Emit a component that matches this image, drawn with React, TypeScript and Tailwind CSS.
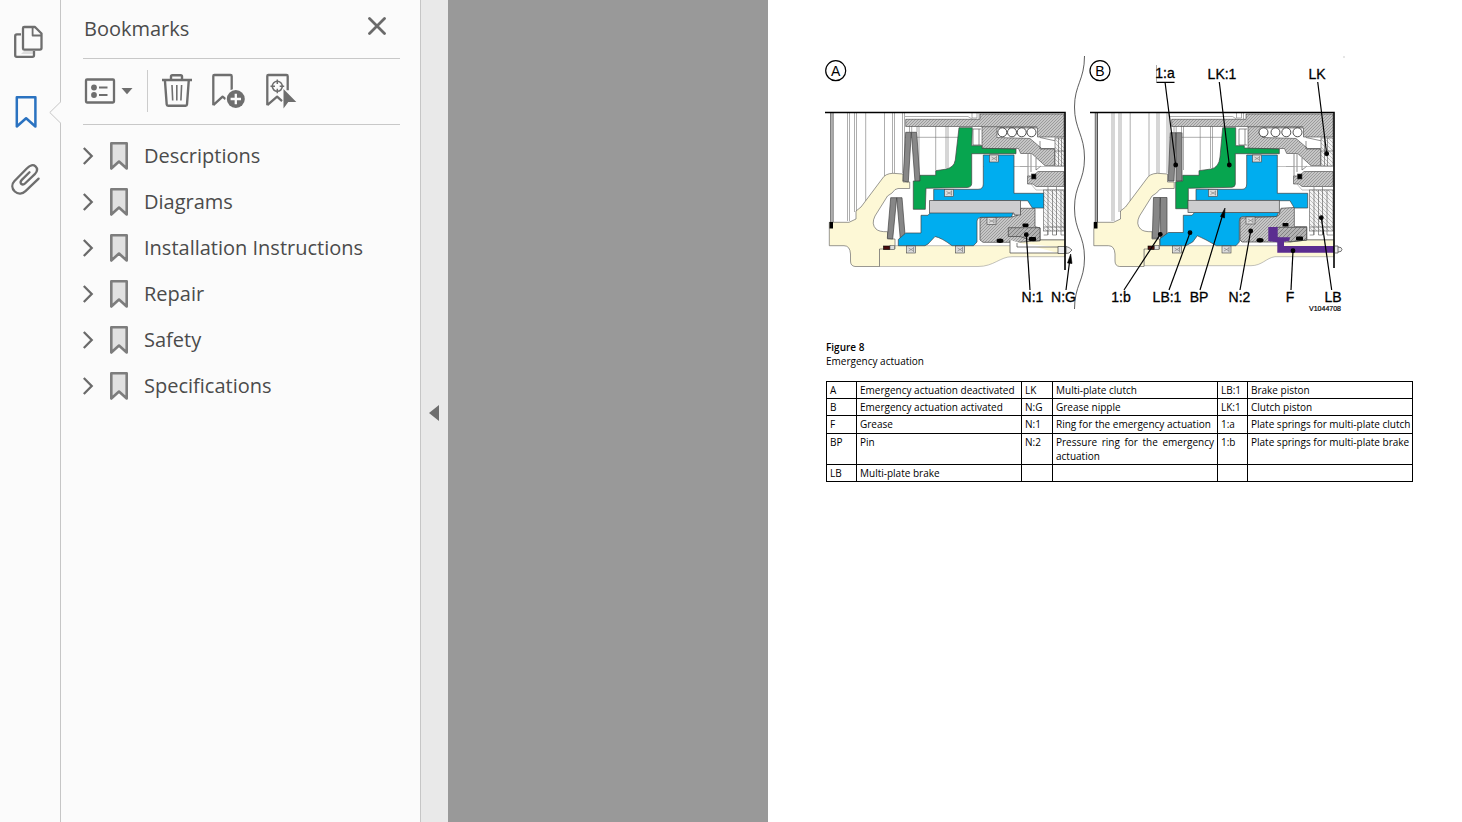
import { useState } from 'react'

const BOOKMARKS = ['Descriptions', 'Diagrams', 'Installation Instructions', 'Repair', 'Safety', 'Specifications']

const LEGEND = [
  ['A', 'Emergency actuation deactivated', 'LK', 'Multi-plate clutch', 'LB:1', 'Brake piston'],
  ['B', 'Emergency actuation activated', 'N:G', 'Grease nipple', 'LK:1', 'Clutch piston'],
  ['F', 'Grease', 'N:1', 'Ring for the emergency actuation', '1:a', 'Plate springs for multi-plate clutch'],
  ['BP', 'Pin', 'N:2', 'Pressure ring for the emergency actuation', '1:b', 'Plate springs for multi-plate brake'],
  ['LB', 'Multi-plate brake', '', '', '', ''],
]

const ROW_HEIGHTS = ['h-[17px]', 'h-[17px]', 'h-[18px]', 'h-[31px]', 'h-[17px]']

/* Rail */

function Rail() {
  return (
    <nav aria-label="Side panels" className="relative w-[60px] shrink-0 flex flex-col gap-8 pt-6 pl-2.5 text-[#6e6e6e]">
      <button aria-label="Page thumbnails" className="w-9 h-9">
        <svg viewBox="10 24 36 36" className="w-9 h-9" fill="none" stroke="currentColor" strokeWidth="2.3" strokeLinejoin="round">
          <path d="M24 51h9v3H21z" fill="#dedede" stroke="none" />
          <path d="M21 34.3h-4.200q-1.600 0-1.600 1.600v19.400q0 1.600 1.600 1.600h15.600q1.600 0 1.600-1.600V51" />
          <path d="M24.300 27h10.700l6.500 6.500v14.600q0 1.600-1.600 1.600H24.300q-1.300 0-1.300-1.300V28.300q0-1.300 1.300-1.300z" />
          <path d="M32.600 27.500v8h8.500" strokeWidth="1.800" />
        </svg>
      </button>
      <button aria-label="Bookmarks" className="w-9 h-9 text-[#2a72c0]">
        <svg viewBox="10 92 36 36" className="w-9 h-9 overflow-visible" fill="none" stroke="currentColor" strokeWidth="2.500" strokeLinejoin="round">
          <path d="M16.800 97.200h18.600v29.300l-9.300-8.300-9.300 8.300z" />
        </svg>
      </button>
      <button aria-label="Attachments" className="w-9 h-9">
        <svg viewBox="10 160 36 36" className="w-9 h-9" fill="none" stroke="currentColor" strokeWidth="2.300" strokeLinecap="round">
          <path d="M38.600 178.600L25.500 191.200C22.500 194 18 194.500 14.800 191.500C11.500 188.300 11.600 184 14.500 181L27 168.300C30 165 33.300 164.300 35.500 166.300C37.800 168.500 37.300 171.500 34.800 174.200L25 183.500C23.500 185 21.700 184.700 20.900 183.500C20.200 182.200 20.700 181 21.800 179.900L29.500 172.200" />
        </svg>
      </button>
      {/* pointer towards the open panel */}
      <svg viewBox="0 0 12 24" className="absolute left-[49px] top-[101px] z-10 w-3 h-6" fill="#fbfbfb" stroke="#c6c6c6">
        <path d="M12 .5L.8 11.500L12 22.500" />
      </svg>
    </nav>
  )
}

/* Bookmarks panel */

function BookmarkRow({ label }: { label: string }) {
  const [open, setOpen] = useState(false)
  return (
    <li className="h-[46px] flex items-center gap-3.5">
      <button aria-label={`Expand ${label}`} aria-expanded={open} onClick={() => setOpen(!open)} className="w-3 h-5">
        <svg viewBox="0 0 12 20" className="w-3 h-5" fill="none" stroke="#6a6a6a" strokeWidth="2.300">
          <path d="M.8 2L8.700 10L.8 18" />
        </svg>
      </button>
      <button className="flex items-center gap-[15px] whitespace-nowrap">
        <svg viewBox="0 0 20 30" className="w-5 h-[30px]" fill="#e1e1e1" stroke="#7d7d7d" strokeWidth="2.600" strokeLinejoin="round">
          <path d="M2.300 2.300h15.400v25.200L10 20.500l-7.700 7z" />
        </svg>
        <span>{label}</span>
      </button>
    </li>
  )
}

function Toolbar() {
  return (
    <div className="h-[66px] flex items-center pb-0.5 border-b border-[#c8c8c8] text-[#6e6e6e]">
      <button aria-label="Options" className="w-[50px] h-9">
        <svg viewBox="83 73 50 36" className="w-[50px] h-9" fill="none" stroke="currentColor" strokeWidth="2.300">
          <rect x="86" y="79.500" width="28" height="23" rx="1" />
          <g fill="currentColor" stroke="none">
            <circle cx="94" cy="87.500" r="2.900" />
            <circle cx="94" cy="95" r="2.900" />
            <path d="M121.500 88h11l-5.500 6.200z" />
          </g>
          <path d="M99 87.500h8.500M99 95h8.500" strokeWidth="2" />
        </svg>
      </button>
      <span className="ml-3.5 mr-3 w-px h-[42px] bg-[#cccccc]" />
      <div className="flex gap-4">
        <button aria-label="Delete bookmark" className="w-[34px] h-9">
          <svg viewBox="160 73 34 36" className="w-[34px] h-9" fill="none" stroke="currentColor" strokeWidth="2.400" strokeLinejoin="round">
            <path d="M162 80h30M171 80v-3.500q0-1.300 1.300-1.300h8.400q1.300 0 1.300 1.300V80" />
            <path d="M164.900 80l1.800 24.500q.1 1.300 1.400 1.300h17.500q1.300 0 1.400-1.300L188.800 80" />
            <path d="M172 85l.7 15.500M176.800 85v15.500M181.600 85l-.7 15.500" strokeWidth="1.600" />
          </svg>
        </button>
        <button aria-label="New bookmark" className="w-9 h-9">
          <svg viewBox="210 73 36 36" className="w-9 h-9" fill="none" stroke="currentColor" strokeWidth="2.300" strokeLinejoin="round">
            <path d="M213.300 105.200V76q0-1 1-1h16.200q1.200 0 1.200 1.200V90M213.300 105.200l9.300-8.500 3 2.500" />
            <circle cx="235.800" cy="99" r="10.300" fill="#fbfbfb" stroke="none" />
            <circle cx="235.800" cy="99" r="9" fill="currentColor" stroke="none" />
            <path d="M235.800 93.800v10.400M230.600 99h10.400" stroke="#fbfbfb" />
          </svg>
        </button>
        <button aria-label="Locate current bookmark" className="w-9 h-9">
          <svg viewBox="262 73 36 36" className="w-9 h-9" fill="none" stroke="currentColor" strokeWidth="2.300" strokeLinejoin="round">
            <path d="M267.300 105.200V76q0-1 1-1h18.200q1.200 0 1.200 1.200v14M267.300 105.200l9.800-8.500 5 4.500" />
            <circle cx="277.300" cy="86.300" r="5" strokeWidth="1.600" />
            <path d="M277.300 79.500v4.500M277.300 88.700v4.500M270.500 86.300h4.500M279.700 86.300h4.500" strokeWidth="1.500" />
            <path d="M283.500 89v19.500l4.800-6.500h8z" fill="currentColor" stroke="#fbfbfb" strokeWidth="1.500" paintOrder="stroke" />
          </svg>
        </button>
      </div>
    </div>
  )
}

function BookmarksPanel() {
  return (
    <aside className="w-[361px] shrink-0 border-x border-[#c6c6c6] pl-[22px] pr-5 text-[20px] leading-7 text-[#4b4b4b] font-['Open_Sans',sans-serif]">
      <header className="h-[59px] flex items-center justify-between border-b border-[#c8c8c8] pr-3">
        <h1 className="pl-px">Bookmarks</h1>
        <button aria-label="Close" className="w-[22px] h-6">
          <svg viewBox="0 0 22 24" className="w-[22px] h-6" stroke="#6a6a6a" strokeWidth="2.800" strokeLinecap="round">
            <path d="M3.500 1.500L18.500 16.500M18.500 1.500L3.500 16.500" />
          </svg>
        </button>
      </header>
      <Toolbar />
      <ul className="pt-2">
        {BOOKMARKS.map(label => <BookmarkRow key={label} label={label} />)}
      </ul>
    </aside>
  )
}

/* Figure: parts shared by both section views */

function Housing({ dx }: { dx: number }) {
  return (
    <g transform={`translate(${dx} 0)`} strokeWidth=".6">
      <g stroke="#777">
        <path d="M847.500 113V221M849.500 113V221M854.500 113V212M856.500 113V212M865.700 113V201M884.500 113V176M892.500 113V173M894.500 113V173M902.500 113V173M904.500 113V173" />
        <path d="M830.800 113V222M833 113V222" stroke="#333" strokeWidth=".9" />
        <path d="M831.900 113V222" stroke="#aaa" strokeWidth="1.400" />
        <path d="M909.500 126V132M911.700 126V132M917 126V132M919 126V170M935.700 126V170M946 126V168M948 126V168M905 137.300H958" />
        <path d="M905 116.500H968L972 119M972 113V118H977V113M979 113V119" fill="none" />
      </g>
      <path
        d="M829.300 245.700V222.300H849L856 219V211L861 207L882 179Q885 173.500 893 173.300L903 174V182H909.700V188.500H898Q895 188.500 892 193L887.500 196L875 216Q871 224 876 229Q879 232 887.500 231.700V239H895V249H879.500V266.500H855Q850.500 266 850.500 261V254Q850 245.700 844 245.700Z"
        fill="#fdf8d6" stroke="#555"
      />
      <rect x="829.500" y="222" width="3.500" height="6.500" fill="#000" />
      <rect x="883.500" y="246" width="6.500" height="3.500" fill="#4a0d0d" stroke="#000" />
      <rect x="890" y="245.500" width="4.500" height="4" fill="#ddd" stroke="#555" />
    </g>
  )
}

function Bearings({ dx, wall, balls }: { dx: number; wall: number; balls: number[] }) {
  const w = wall - 1 - dx
  return (
    <g transform={`translate(${dx} 0)`} stroke="#444" strokeWidth=".6">
      <path d={`M905.700 119.300H980V114H${w}V137H1037.500V128H997V137.500L1030 138.500L1041.700 148.500H1054.500V165.700H1045L1031.700 153.500H1020.700L1018.500 148.500H982V126.500H905.700Z`} fill="url(#hatch)" />
      <path d="M982 126.700H1037" />
      {balls.map(x => (
        <circle key={x} cx={x} cy="132.300" r="4.500" fill="#fff" stroke="#222" strokeWidth=".8" />
      ))}
      <path d="M973 129V145M979 129V145M973 129H981M973 145H981M1040 137.500L1056 141H1064M1040 141V149H1054" fill="none" />
      <g stroke="#555">
        <rect x="1055" y="138" width={w - 1055} height="28" fill="url(#plates)" />
        <path d={`M1055 151H${w}M1058.500 138V166M1061.500 138V166`} />
      </g>
      <path d="M1028 154V176M1031 154V172M1036 158V170M1036 170L1041 166" fill="none" />
      <path d={`M1027.500 176V184H1033L1036 186.500H${w}V171.500H1038L1033 176Z`} fill="url(#hatch)" />
      <rect x="1031.500" y="174" width="4.500" height="5" fill="#000" />
      <path d={`M1031 184L1036 190H${w}M1020 166.500H${w}M983 166.500H1028`} stroke="#999" fill="none" />
      <g stroke="#555">
        <rect x="1043.700" y="190" width={w - 1043.700} height="41" fill="url(#plates)" />
        <path d="M1048 187V235M1052.500 190V235M1056.500 187V235M1061 190V235" />
        <path d={`M1043.700 227H${w}M1043.700 235h4v-5M1052.500 235h4v-5M1061 235h${w - 1061}M1039 240H${w}`} fill="none" />
      </g>
    </g>
  )
}

function Seal({ x, y }: { x: number; y: number }) {
  return (
    <g stroke="#444" strokeWidth=".6">
      <rect x={x} y={y} width="9" height="7" fill="#dcdcdc" />
      <path d={`M${x + 2} ${y + 2}l5 3M${x + 2} ${y + 5}l5-3M${x + 7} ${y + 1}v5`} stroke="#777" />
    </g>
  )
}

function ViewA() {
  return (
    <g>
      <path d="M879.500 245.700H1012V242L1040 239.500H1065V256.700H1012C1000 256.700 994 266.500 978 266.500H879.500Z" fill="#fdf8d6" stroke="#999" strokeWidth=".6" />
      <Housing dx={0} />
      <Bearings dx={0} wall={1065} balls={[1002.300, 1012, 1021.700, 1031.500]} />
      <g stroke="#444" strokeWidth=".7">
        <path d="M905.700 132.300H911.300L908.300 182L903 181ZM911.300 132.300H916.700L920 181L915 181.700ZM890.700 197.700H896.700L892.700 239L887.300 238.300ZM896.700 197.700H902L905.300 238.300L900.300 239Z" fill="#878787" />
        <path d="M980 217.300L1013 216.700L1018 215L1021 208.300H1035V226.700L1040 228V240.700L1018 242.300H983L980 240Z" fill="url(#hatch)" />
        <path d="M1008.300 227.700H1040V240.700L1033 241L1020 236.500H1008.300Z" fill="url(#ring)" />
        <path d="M933.700 189.300H978Q983.300 189.300 983.300 184V155H1014V193.300H1043.700V208H1032.300L1027.700 200.700H933.700Z" fill="#00adef" />
        <path d="M898.300 245.700V239.500L905.700 233H921V215.300H928L931 212H1013.300L1011.500 217L981 217.300Q977 217.500 977 221V242L973.500 245.700H952Q942 238 935 236.500L928 244L925 245.700Z" fill="#00adef" />
        <path d="M913.300 209.300V181H920V175.300H935.700V170.700L945 169.300Q954 168 955.300 160L959 127.700H972.300L971.700 145.700H982V148.300L1016 149V153.700H971.700V183.300Q971.700 187.300 967 187.500L926 188.300L925.300 209.300Z" fill="#07a54f" />
        <path d="M929.500 200.500H1020.500V215H1014V213H929.500Z" fill="#cdcdcf" />
        <path d="M1010 240V253H1058M1017 243V247H1058" fill="#fff" />
        <path d="M1058 246.500h7v7h-7zM1066 246.500l3 1 3 2.500-3 3-3 .5z" fill="#eee" />
      </g>
      <g>
        <ellipse cx="1000" cy="240.700" rx="3.500" ry="2.200" />
        <rect x="1022.500" y="223.500" width="6" height="3.500" rx="1" />
        <rect x="1029" y="237" width="7" height="4" rx="1" />
      </g>
      <Seal x={989.500} y={155} />
      <Seal x={944.500} y={189.500} />
      <Seal x={987} y={217.500} />
      <Seal x={906.500} y={246} />
      <Seal x={955.500} y={246} />
      <path d="M825 112.500H1065V270" fill="none" stroke="#000" strokeWidth="1.600" />
    </g>
  )
}

function ViewB() {
  return (
    <g>
      <path d="M1144 245.700H1278V242L1306 239.500H1334V256.700H1275C1266 258 1262 265.700 1251 265.700H1144Z" fill="#fdf8d6" stroke="#999" strokeWidth=".6" />
      <Housing dx={264.500} />
      <Bearings dx={266} wall={1334} balls={[997.500, 1009.500, 1020.300, 1031.500]} />
      <g stroke="#444" strokeWidth=".7">
        <path d="M1170.300 132.700H1176L1174 181H1168.300ZM1176 132.700H1182V181H1176ZM1153.500 197.500H1160.300L1158.700 238.300H1152.300ZM1160.300 197.500H1167V238.300H1160.700Z" fill="#878787" />
        <path d="M1240 218L1275 216.700L1279 215L1281 208.300L1294.300 207.500V226.700H1306.700V240L1290 242H1242L1240 240Z" fill="url(#hatch)" />
        <path d="M1276 227.300H1306.700V240L1290 241.700L1276 237Z" fill="url(#ring)" />
        <path d="M1196 189.300H1242Q1246.700 189.300 1246.700 184V155H1277.300V193.300H1307.700V208H1294.300L1290 200.700H1196Z" fill="#00adef" />
        <path d="M1160 245.700V238.700L1168.300 232.500H1183.300V215.300H1192L1195 212H1279L1276.500 216.500L1242 216.700Q1239.300 217 1239.300 221V242L1236 245.700H1216.500Q1205 239 1197.300 235.700L1192.700 242L1186 245.700Z" fill="#00adef" />
        <path d="M1175.700 208.700V181.700L1182.700 181V175.300H1199V170.700L1211 169Q1219 167.500 1220 157L1222.700 127.700H1235.700V145.700H1244.300V148L1279.300 149V153.700H1235.300V184Q1235.300 187 1232 187.300L1188.300 188.300V208.700Z" fill="#07a54f" />
        <rect x="1188" y="200.300" width="91.300" height="12.300" fill="#cdcdcf" />
        <path d="M1268.300 230V227H1277.700V237.300H1290L1289.300 240.700L1284 241.700V246H1334V252.700H1277.300V242.300L1268.300 241Z" fill="#5b2d90" stroke="none" />
        <path d="M1335 246h3v7h-3M1338 247q4 0 4 2.500t-4 2.500" fill="#eee" />
      </g>
      <g>
        <ellipse cx="1260" cy="240.300" rx="3.500" ry="2.200" />
        <rect x="1282.500" y="223" width="6" height="3.500" rx="1" />
        <rect x="1296" y="236.500" width="7" height="4" rx="1" />
      </g>
      <Seal x={1252.500} y={155} />
      <Seal x={1208.500} y={189.500} />
      <Seal x={1246} y={217} />
      <Seal x={1172.500} y={246} />
      <Seal x={1222} y={246} />
      <path d="M1090 112.500H1334V268" fill="none" stroke="#000" strokeWidth="1.600" />
    </g>
  )
}

const LEADERS = [
  [1030, 290, 1026.300, 234.700],
  [1165, 82, 1175.700, 165],
  [1219.300, 82, 1229.300, 165],
  [1317.700, 82, 1326.700, 153.700],
  [1331.700, 290, 1321.300, 217.700],
  [1291, 290, 1293, 250.700],
  [1240, 290, 1250.700, 231],
  [1169, 290, 1190, 232.700],
  [1124, 290, 1160.300, 234.300],
]

const CALLOUTS: [string, number, number][] = [
  ['N:1', 1032.500, 302],
  ['N:G', 1063.500, 302],
  ['1:a', 1165, 78],
  ['LK:1', 1222, 79],
  ['LK', 1317, 79],
  ['1:b', 1121, 302],
  ['LB:1', 1167, 302],
  ['BP', 1199, 302],
  ['N:2', 1239.500, 302],
  ['F', 1290, 302],
  ['LB', 1333, 302],
]

function SectionDrawing() {
  return (
    <svg viewBox="820 50 530 265" className="w-[530px] h-[265px]" role="img" aria-label="Emergency actuation section views">
      <defs>
        <pattern id="hatch" width="3" height="3" patternUnits="userSpaceOnUse">
          <rect width="3" height="3" fill="#c6c6c6" />
          <path d="M-1 1L1 -1M0 3L3 0M2 4L4 2" stroke="#909090" strokeWidth=".8" />
        </pattern>
        <pattern id="ring" width="4" height="4" patternUnits="userSpaceOnUse">
          <rect width="4" height="4" fill="#b2b2b2" />
          <path d="M-1 1L1 -1M0 4L4 0M3 5L5 3" stroke="#777" strokeWidth=".8" />
        </pattern>
        <pattern id="plates" width="4" height="4" patternUnits="userSpaceOnUse">
          <rect width="4" height="4" fill="#f4f4f4" />
          <path d="M-1 3L1 5M0 0L4 4M3 -1L5 1" stroke="#999" strokeWidth=".6" />
        </pattern>
      </defs>
      <ViewA />
      <ViewB />
      <path d="M1084.500 56C1084.500 80 1074.500 85 1074.500 107S1084.500 135 1084.500 158S1074.500 185 1074.500 208S1084.500 235 1084.500 258S1074.500 285 1074.500 309" fill="none" stroke="#333" strokeWidth=".8" />

      <g stroke="#000" strokeWidth="1.200">
        {LEADERS.map(([x1, y1, x2, y2]) => (
          <g key={`${x1}-${x2}`}>
            <line x1={x1} y1={y1} x2={x2} y2={y2} />
            <circle cx={x2} cy={y2} r="1.800" />
          </g>
        ))}
        <path d="M1066 290L1069.500 262M1200 290L1222 217M1156.500 82.300H1174.500" />
        <path d="M1070.700 254L1067.500 263L1072 263.500ZM1225 208L1220.500 216.500L1224.500 218Z" strokeWidth=".6" />
        <path d="M1156.500 65V82" stroke="#888" strokeWidth=".7" />
      </g>

      <g className="font-['Liberation_Sans',sans-serif] text-[14px]" textAnchor="middle">
        <g stroke="#000" strokeWidth=".3">
          {CALLOUTS.map(([text, x, y]) => <text key={text} x={x} y={y}>{text}</text>)}
        </g>
        <g fill="none" stroke="#000" strokeWidth="1.200">
          <circle cx="835.700" cy="70.700" r="10" />
          <circle cx="1100" cy="70.700" r="10" />
        </g>
        <text x="835.700" y="75.500">A</text>
        <text x="1100" y="75.500">B</text>
      </g>
      <text x="1325" y="311" textAnchor="middle" className="font-['Liberation_Sans',sans-serif] text-[7px]" stroke="#000" strokeWidth=".2">V1044708</text>
      <circle cx="1344" cy="57" r=".7" fill="#bbb" />
    </svg>
  )
}

function DocumentPage() {
  return (
    <main className="flex-1 min-w-0 bg-white pt-[50px] pl-[52px] text-black text-[10px] leading-[14px] font-['Open_Sans',sans-serif]">
      <figure>
        <SectionDrawing />
        <figcaption className="pt-[25px] pl-1.5">
          <strong className="block font-semibold">Figure 8</strong>
          Emergency actuation
        </figcaption>
      </figure>
      <table className="mt-[13px] ml-1.5 w-[587px] table-fixed border-collapse">
        <colgroup>
          <col className="w-[30px]" />
          <col className="w-[165px]" />
          <col className="w-[31px]" />
          <col className="w-[165px]" />
          <col className="w-[30px]" />
          <col />
        </colgroup>
        <tbody>
          {LEGEND.map((row, i) => (
            <tr key={row[0]} className={ROW_HEIGHTS[i]}>
              {row.map((cell, j) => (
                <td
                  key={j}
                  className={`border border-black pl-[3px] pt-px align-top text-justify ${j === 5 ? 'whitespace-nowrap' : 'pr-[3px]'}`}
                >
                  {cell}
                </td>
              ))}
            </tr>
          ))}
        </tbody>
      </table>
    </main>
  )
}

export default function App() {
  return (
    <div className="min-h-screen flex bg-[#fbfbfb]">
      <Rail />
      <BookmarksPanel />
      <div className="w-[27px] shrink-0 bg-[#e9e9e9] flex items-center justify-center pt-1 pr-0.5">
        <button aria-label="Collapse panel" className="w-3 h-4">
          <svg viewBox="0 0 12 16" className="w-3 h-4" fill="#6e6e6e">
            <path d="M11 0v16L1 8z" />
          </svg>
        </button>
      </div>
      <div className="w-80 shrink-0 bg-[#999999]" />
      <DocumentPage />
    </div>
  )
}
